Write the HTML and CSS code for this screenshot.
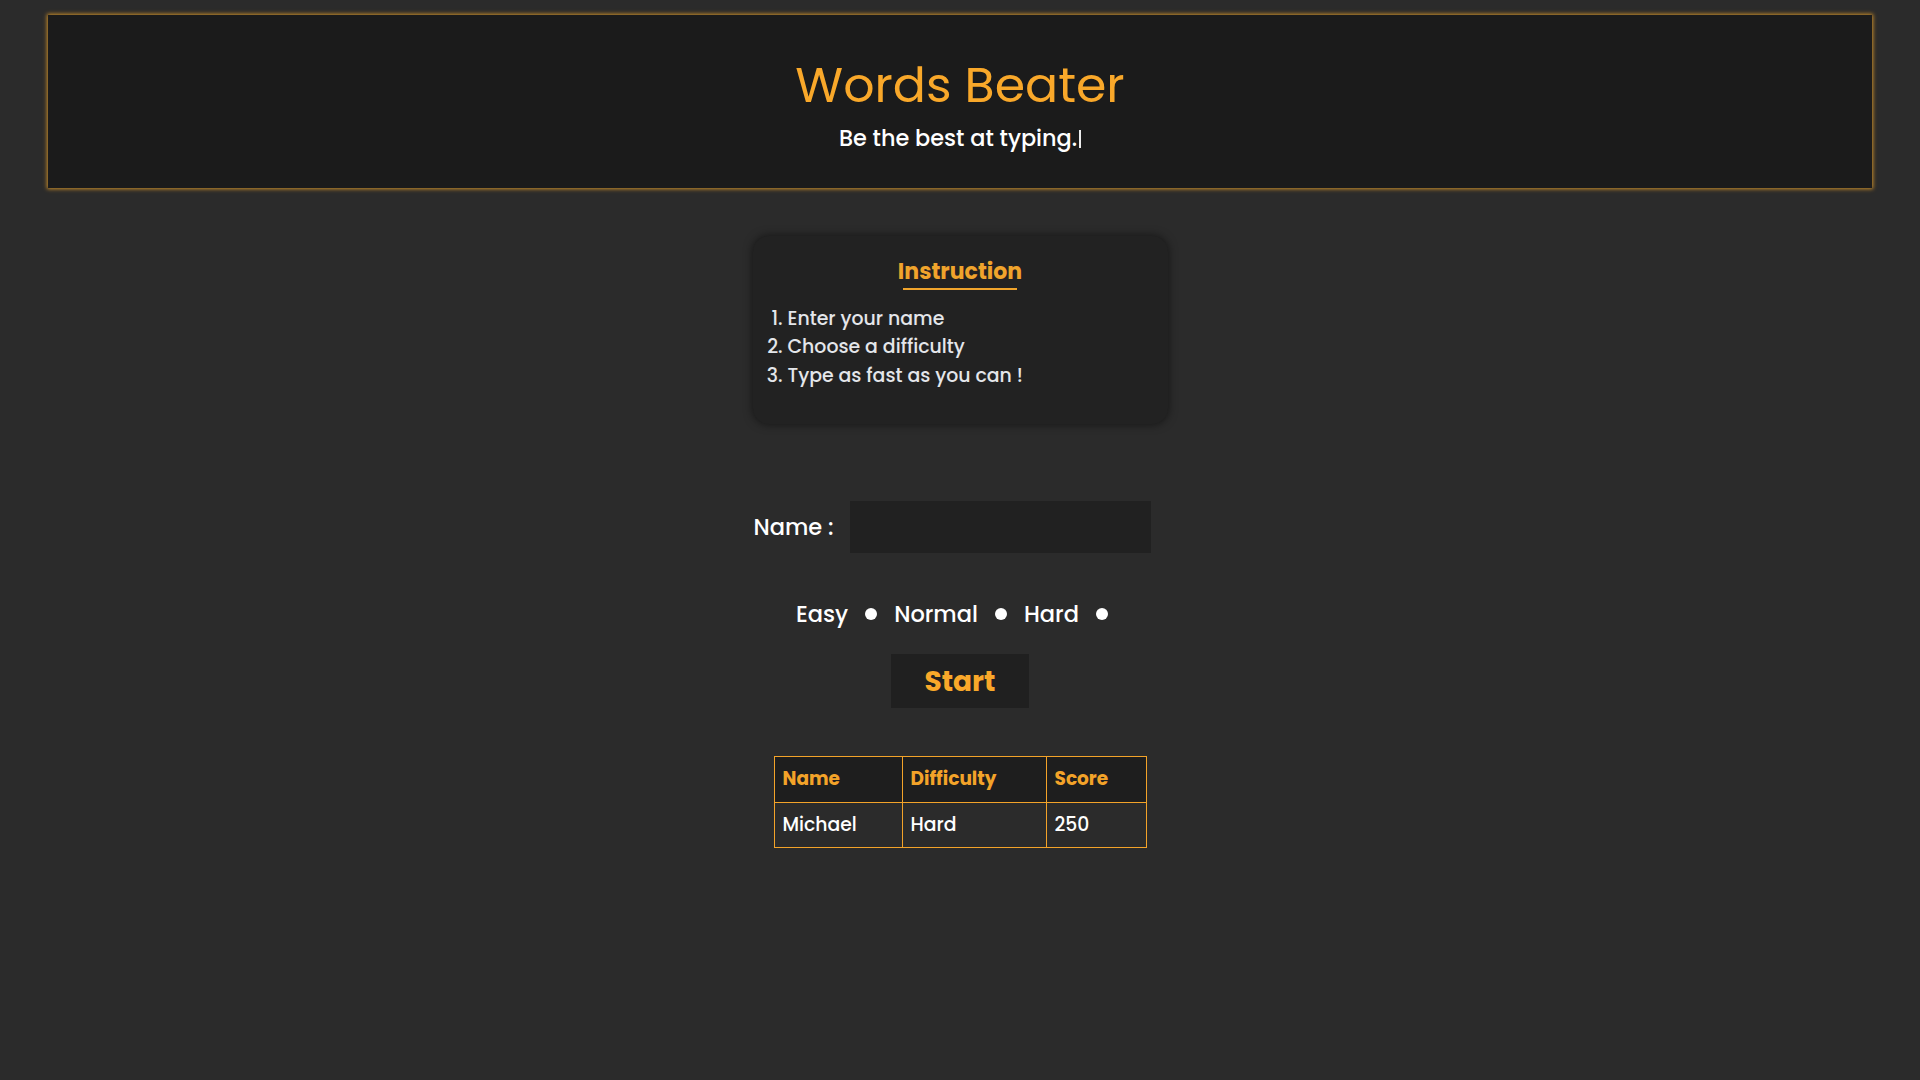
FILE: index.html
```html
<!DOCTYPE html>
<html lang="en">
<head>
<meta charset="utf-8">
<title>Words Beater</title>
<link rel="stylesheet" href="styles.css">
</head>
<body>
<header class="top">
  <h1 class="title">Words Beater</h1>
  <p class="subtitle">Be the best at typing.<span class="caret"></span></p>
</header>

<main class="main">
  <section class="card">
    <h2 class="card-title">Instruction</h2>
    <ol class="steps">
      <li>Enter your name</li>
      <li>Choose a difficulty</li>
      <li>Type as fast as you can !</li>
    </ol>
  </section>

  <form class="form">
    <div class="name-row">
      <label class="name-label" for="name">Name :</label>
      <input class="name-input" id="name" type="text">
    </div>
    <div class="level-row">
      <label class="level"><span>Easy</span><input class="dot" type="radio" name="level"></label>
      <label class="level"><span>Normal</span><input class="dot" type="radio" name="level"></label>
      <label class="level"><span>Hard</span><input class="dot" type="radio" name="level"></label>
    </div>
    <button class="start" type="button">Start</button>
  </form>

  <table class="scores">
    <colgroup><col class="c1"><col class="c2"><col class="c3"></colgroup>
    <thead>
      <tr><th>Name</th><th>Difficulty</th><th>Score</th></tr>
    </thead>
    <tbody>
      <tr><td>Michael</td><td>Hard</td><td>250</td></tr>
    </tbody>
  </table>
</main>
</body>
</html>
```

FILE: styles.css
```css
* { box-sizing: border-box; }

body {
  margin: 0;
  background: #2b2b2b;
  font-family: "Poppins", "DejaVu Sans", sans-serif;
  color: #fff;
  min-height: 100vh;
}

.top {
  width: 95%;
  height: 173px;
  margin: 15px auto 0;
  background: #1b1b1b;
  box-shadow: 0 0 4px 1px rgba(232, 160, 40, 0.85);
  display: flex;
  flex-direction: column;
  align-items: center;
  padding-top: 42px;
}

.title {
  margin: 0;
  font-size: 49px;
  line-height: 56px;
  font-weight: 400;
  color: #f9a82a;
}

.subtitle {
  margin: 10px 0 0;
  font-size: 22.4px;
  line-height: 30px;
  font-weight: 500;
  color: #fff;
  display: flex;
  align-items: center;
}

.caret {
  display: inline-block;
  width: 2px;
  height: 18px;
  background: #ececec;
  margin-left: 2px;
  margin-top: 2px;
}

.main {
  display: flex;
  flex-direction: column;
  align-items: center;
}

.card {
  width: 415px;
  height: 188px;
  margin-top: 48px;
  background: #222;
  border-radius: 16px;
  box-shadow: 0 0 10px rgba(0, 0, 0, 0.55);
  padding-top: 21px;
  display: flex;
  flex-direction: column;
}

.card-title {
  position: relative;
  align-self: center;
  margin: 0;
  font-size: 22px;
  line-height: 30px;
  font-weight: 700;
  color: #f0a42c;
  padding-bottom: 3px;
}

.card-title::after {
  content: "";
  position: absolute;
  left: 4%;
  right: 4%;
  bottom: 0;
  height: 2px;
  background: #f0a42c;
}

.steps {
  margin: 15px 0 0;
  padding-left: 35px;
  font-size: 18.9px;
  line-height: 28.4px;
  font-weight: 500;
  color: #e4e6ea;
}

.form {
  display: flex;
  flex-direction: column;
  align-items: center;
}

.name-row {
  display: flex;
  align-items: center;
  margin-top: 77px;
  margin-left: -16px;
}

.name-label {
  font-size: 22.5px;
  font-weight: 500;
  color: #fff;
  margin-right: 16px;
}

.name-input {
  width: 301px;
  height: 52px;
  border: none;
  outline: none;
  background: #212121;
  color: #fff;
  font: inherit;
  padding: 0 12px;
}

.level-row {
  display: flex;
  align-items: center;
  height: 30px;
  margin-top: 46px;
  margin-left: -16px;
}

.level {
  display: flex;
  align-items: center;
  font-size: 22.5px;
  font-weight: 500;
  line-height: 30px;
  color: #fff;
  margin-right: 17px;
}

.level:last-child { margin-right: 0; }

.dot {
  appearance: none;
  -webkit-appearance: none;
  width: 12px;
  height: 12px;
  margin: 0 0 0 17px;
  border-radius: 50%;
  background: #fff;
}

.start {
  margin-top: 25px;
  width: 138px;
  height: 54px;
  border: none;
  background: #202020;
  color: #f9a82a;
  font-family: inherit;
  font-size: 28px;
  font-weight: 700;
  display: flex;
  align-items: center;
  justify-content: center;
  padding: 2px 0 0;
}

.scores {
  margin-top: 48px;
  width: 372px;
  border-collapse: collapse;
  table-layout: fixed;
}

.c1 { width: 128px; }
.c2 { width: 144px; }
.c3 { width: 100px; }

.scores th,
.scores td {
  border: 1px solid #f3a329;
  text-align: left;
  padding: 0 8px 2px;
}

.scores th {
  height: 46px;
  background: #1e1e1e;
  color: #f3a329;
  font-size: 18.5px;
  font-weight: 700;
}

.scores td {
  height: 45px;
  color: #fff;
  font-size: 18.8px;
  font-weight: 500;
}
```
